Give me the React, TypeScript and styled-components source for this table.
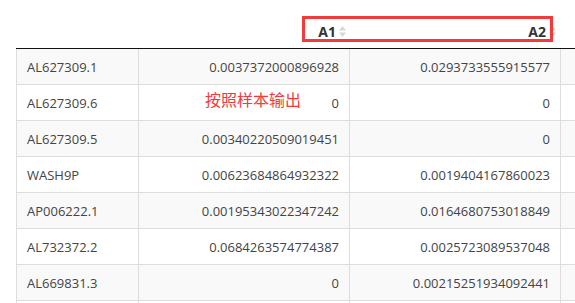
import React from 'react';
import styled, { createGlobalStyle } from 'styled-components';

const GlobalStyle = createGlobalStyle`
  html, body {
    margin: 0;
    padding: 0;
    background: #fff;
  }
  body {
    font-family: "Open Sans", "Liberation Sans", sans-serif;
    color: #333;
  }
`;

// Page holds the table and the red annotations drawn over it
const Page = styled.div`
  position: relative;
  width: 575px;
  height: 303px;
  padding: 16px 0 0 16px;
  box-sizing: border-box;
  overflow: hidden;
`;

const Grid = styled.div`
  display: grid;
  grid-template-columns: 123px 211px 211px 211px;
  width: 756px;
`;

const HeadRow = styled(Grid)`
  height: 33px;
  border-bottom: 1px solid #111;
  box-sizing: border-box;
`;

const HeadCell = styled.div<{ $pad: number }>`
  display: flex;
  align-items: center;
  justify-content: flex-end;
  gap: 3px;
  padding-right: ${(p) => p.$pad}px;
  padding-bottom: 2px;
  font-size: 14px;
  font-weight: 700;
  color: #333;
`;

const BodyRow = styled(Grid)<{ $odd: boolean }>`
  height: 36px;
  background: ${(p) => (p.$odd ? '#f9f9f9' : '#fff')};
`;

const Cell = styled.div<{ $first?: boolean; $num?: boolean }>`
  display: flex;
  align-items: center;
  justify-content: ${(p) => (p.$num ? 'flex-end' : 'flex-start')};
  padding: 0 10px;
  box-sizing: border-box;
  border-bottom: 1px solid #ddd;
  border-right: 1px solid #ddd;
  border-left: ${(p) => (p.$first ? '1px solid #ddd' : 'none')};
  font-size: 13px;
  color: #444;
  white-space: nowrap;
`;

const HighlightBox = styled.div`
  position: absolute;
  left: 302px;
  top: 16px;
  width: 251px;
  height: 26px;
  border: 3px solid #f23a3a;
  box-sizing: border-box;
  pointer-events: none;
`;

const Note = styled.div`
  position: absolute;
  left: 205px;
  top: 87px;
  font-family: "Noto Sans CJK SC", "Noto Sans", sans-serif;
  font-size: 16px;
  color: #f23a3a;
  white-space: nowrap;
`;

function SortIcon() {
  return (
    <svg width="7" height="11" viewBox="0 0 7 11">
      <path d="M3.5 0 L7 4.5 L0 4.5 Z" fill="#d6d6d6" />
      <path d="M0 6.5 L7 6.5 L3.5 11 Z" fill="#d6d6d6" />
    </svg>
  );
}

const rows: [string, string, string][] = [
  ['AL627309.1', '0.0037372000896928', '0.0293733555915577'],
  ['AL627309.6', '0', '0'],
  ['AL627309.5', '0.00340220509019451', '0'],
  ['WASH9P', '0.00623684864932322', '0.0019404167860023'],
  ['AP006222.1', '0.00195343022347242', '0.0164680753018849'],
  ['AL732372.2', '0.0684263574774387', '0.0025723089537048'],
  ['AL669831.3', '0', '0.00215251934092441'],
  ['', '', ''],
];

export default function App() {
  return (
    <>
      <GlobalStyle />
      <Page>
        <HeadRow>
          <HeadCell $pad={0} />
          <HeadCell $pad={4}>
            <span>A1</span>
            <SortIcon />
          </HeadCell>
          <HeadCell $pad={5}>
            <span>A2</span>
            <SortIcon />
          </HeadCell>
          <HeadCell $pad={5} />
        </HeadRow>
        {rows.map(([gene, a1, a2], i) => (
          <BodyRow key={i} $odd={i % 2 === 0}>
            <Cell $first>{gene}</Cell>
            <Cell $num>{a1}</Cell>
            <Cell $num>{a2}</Cell>
            <Cell $num />
          </BodyRow>
        ))}
        <HighlightBox />
        <Note>按照样本输出</Note>
      </Page>
    </>
  );
}
